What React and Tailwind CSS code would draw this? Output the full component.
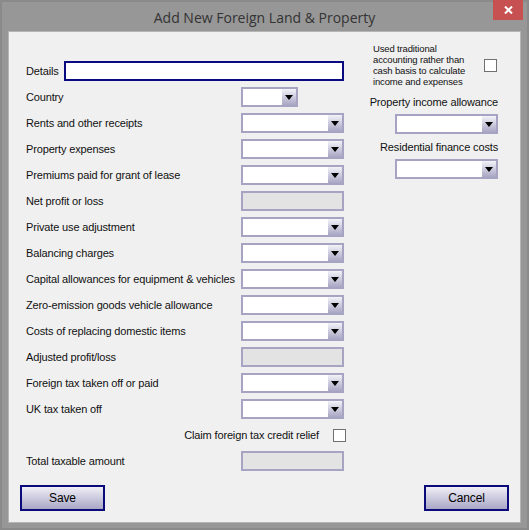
import React from "react";

const rows = [
  { label: "Country", kind: "small" },
  { label: "Rents and other receipts", kind: "select" },
  { label: "Property expenses", kind: "select" },
  { label: "Premiums paid for grant of lease", kind: "select" },
  { label: "Net profit or loss", kind: "readonly" },
  { label: "Private use adjustment", kind: "select" },
  { label: "Balancing charges", kind: "select" },
  { label: "Capital allowances for equipment & vehicles", kind: "select" },
  { label: "Zero-emission goods vehicle allowance", kind: "select" },
  { label: "Costs of replacing domestic items", kind: "select" },
  { label: "Adjusted profit/loss", kind: "readonly" },
  { label: "Foreign tax taken off or paid", kind: "select" },
  { label: "UK tax taken off", kind: "select" },
];

const Arrow = () => (
  <svg width="8" height="5" viewBox="0 0 8 5">
    <polygon points="0,0 8,0 4,5" fill="#000" />
  </svg>
);

const Select = ({ width = "w-[103px]" }) => (
  <div className={`${width} h-[20px] flex border-2 border-[#a7a3c3] bg-white`}>
    <div className="flex-1" />
    <div className="w-[14px] h-full flex items-center justify-center bg-gradient-to-b from-[#f3f3f8] to-[#a9a6c4]">
      <Arrow />
    </div>
  </div>
);

const ReadOnly = () => (
  <div className="w-[103px] h-[20px] border-2 border-[#a7a3c3] bg-[#e3e3e3]" />
);

const Checkbox = () => (
  <div className="w-[13px] h-[13px] border border-[#707070] bg-white" />
);

const Button = ({ children }) => (
  <button className="w-[85px] h-[26px] border-2 border-[#0a0a7a] bg-gradient-to-b from-[#f0eff6] to-[#aaa7c6] text-[12px] text-black">
    {children}
  </button>
);

export default function App() {
  return (
    <div
      className="w-[529px] h-[530px] bg-[#979797] border-2 border-[#8a8a8a] flex flex-col"
      style={{ fontFamily: '"Liberation Sans", Arial, sans-serif' }}
    >
      {/* title bar */}
      <div className="h-[29px] flex items-start relative">
        <div
          className="flex-1 text-center text-[14px] text-[#333] pt-[5px]"
          style={{ fontFamily: '"Open Sans", sans-serif' }}
        >
          Add New Foreign Land &amp; Property
        </div>
        <div className="absolute right-[4px] top-[-2px] w-[30px] h-[20px] bg-[#c75050] flex items-center justify-center">
          <svg width="9" height="8" viewBox="0 0 9 8">
            <path d="M1 0.5 L8 7.5 M8 0.5 L1 7.5" stroke="#fff" strokeWidth="2" />
          </svg>
        </div>
      </div>

      {/* content panel */}
      <div className="mx-[6px] w-[513px] h-[492px] bg-[#f0f0f0] border border-[#b5b5b5] flex flex-col text-[11px] tracking-[-0.15px] text-[#111]">
        <div className="flex">
          {/* left column */}
          <div className="w-[343px] pl-[17px] pt-[29px] flex flex-col gap-[6px]">
            <div className="h-[20px] flex items-center">
              <span className="w-[38px]">Details</span>
              <div className="w-[280px] h-[20px] border-2 border-[#0a0a80] bg-white" />
            </div>
            {rows.map((r) => (
              <div key={r.label} className="h-[20px] flex items-center">
                <span className="w-[215px] whitespace-nowrap">{r.label}</span>
                {r.kind === "small" && <Select width="w-[57px]" />}
                {r.kind === "select" && <Select />}
                {r.kind === "readonly" && <ReadOnly />}
              </div>
            ))}
            <div className="h-[20px] flex items-center justify-end pr-[6px] gap-[14px]">
              <span className="whitespace-nowrap">Claim foreign tax credit relief</span>
              <Checkbox />
            </div>
            <div className="h-[20px] flex items-center">
              <span className="w-[215px]">Total taxable amount</span>
              <ReadOnly />
            </div>
          </div>

          {/* right column */}
          <div className="w-[128px] ml-[18px] flex flex-col items-end">
            <div className="w-full flex items-center justify-between pt-[11px] pl-[3px]">
              <span className="text-[9.5px] leading-[11px] whitespace-nowrap">
                Used traditional
                <br />
                accounting rather than
                <br />
                cash basis to calculate
                <br />
                income and expenses
              </span>
              <div className="mr-[1px]">
                <Checkbox />
              </div>
            </div>
            <div className="mt-[8px] leading-[14px] whitespace-nowrap">Property income allowance</div>
            <div className="mt-[5px]">
              <Select />
            </div>
            <div className="mt-[6px] leading-[14px] whitespace-nowrap">Residential finance costs</div>
            <div className="mt-[5px]">
              <Select />
            </div>
          </div>
        </div>

        <div className="flex justify-between px-[11px] mt-[14px]">
          <Button>Save</Button>
          <Button>Cancel</Button>
        </div>
      </div>
    </div>
  );
}
